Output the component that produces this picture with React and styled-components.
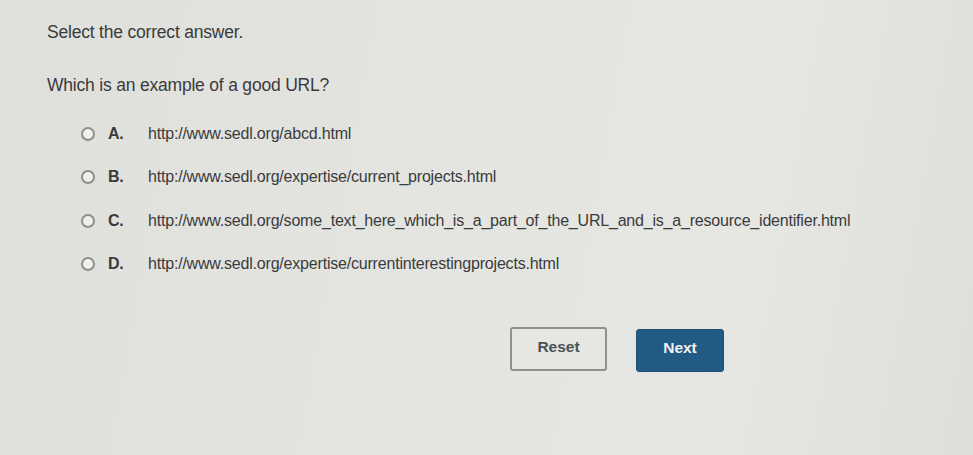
import React from "react";
import styled, { createGlobalStyle } from "styled-components";

const Global = createGlobalStyle`
  html, body { margin: 0; padding: 0; }
  body {
    width: 973px;
    height: 455px;
    overflow: hidden;
    background: linear-gradient(100deg, #dfe0dc 0%, #e4e5e1 45%, #e6e7e3 75%, #dedfdb 100%);
    font-family: "Liberation Sans", Arial, sans-serif;
    color: #3a3b3b;
  }
`;

const Page = styled.div`
  padding: 22px 0 0 47px;
  display: flex;
  flex-direction: column;
`;

const Instruction = styled.div`
  font-size: 17.5px;
  line-height: 20px;
  letter-spacing: -0.2px;
`;

const Question = styled.div`
  margin-top: 33px;
  font-size: 17.5px;
  line-height: 20px;
  letter-spacing: -0.2px;
`;

const Options = styled.div`
  margin-top: 29px;
  margin-left: 34px;
  display: flex;
  flex-direction: column;
  gap: 24.5px;
`;

const Option = styled.label`
  display: flex;
  align-items: center;
  height: 19px;
  font-size: 16px;
  letter-spacing: -0.2px;
  cursor: pointer;
`;

const Radio = styled.span`
  width: 10px;
  height: 10px;
  border: 2px solid #8d8f8e;
  border-radius: 50%;
  background: #eef0ec;
  flex: none;
`;

const Letter = styled.span`
  font-weight: bold;
  width: 26px;
  margin-left: 13px;
  color: #3a3b3b;
`;

const Url = styled.span`
  margin-left: 14px;
  white-space: nowrap;
`;

const Actions = styled.div`
  display: flex;
  gap: 29px;
  margin-top: 53px;
  margin-left: 463px;
  align-items: flex-start;
`;

const Button = styled.button`
  font-family: "Liberation Sans", Arial, sans-serif;
  font-weight: bold;
  font-size: 15.5px;
  border-radius: 3px;
  cursor: pointer;
  height: ${(p) => (p.$primary ? "43px" : "44px")};
  margin-top: ${(p) => (p.$primary ? "2px" : "0")};
  width: ${(p) => (p.$primary ? "88px" : "97px")};
  background: ${(p) => (p.$primary ? "#215a82" : "#e6e7e3")};
  color: ${(p) => (p.$primary ? "#f2f4f5" : "#4a5254")};
  border: ${(p) => (p.$primary ? "1px solid #1d5078" : "2px solid #8e918f")};
  padding: 0 0 4px 0;
`;

const options = [
  ["A.", "http://www.sedl.org/abcd.html"],
  ["B.", "http://www.sedl.org/expertise/current_projects.html"],
  ["C.", "http://www.sedl.org/some_text_here_which_is_a_part_of_the_URL_and_is_a_resource_identifier.html"],
  ["D.", "http://www.sedl.org/expertise/currentinterestingprojects.html"],
];

export default function App() {
  return (
    <>
      <Global />
      <Page>
        <Instruction>Select the correct answer.</Instruction>
        <Question>Which is an example of a good URL?</Question>
        <Options>
          {options.map(([l, u]) => (
            <Option key={l}>
              <Radio />
              <Letter>{l}</Letter>
              <Url>{u}</Url>
            </Option>
          ))}
        </Options>
        <Actions>
          <Button>Reset</Button>
          <Button $primary>Next</Button>
        </Actions>
      </Page>
    </>
  );
}
